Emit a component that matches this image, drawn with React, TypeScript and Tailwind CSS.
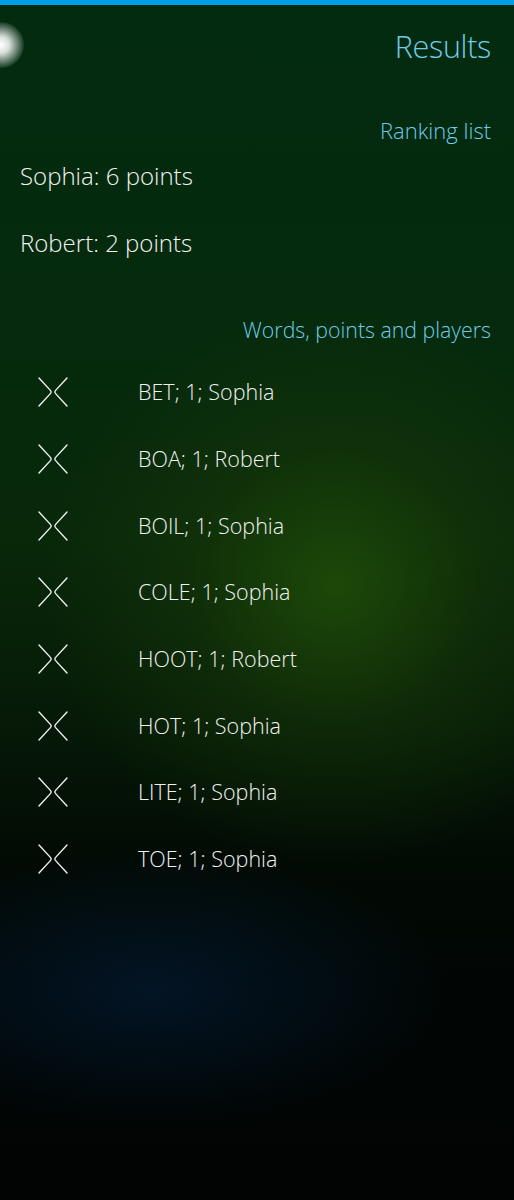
import React from "react";

const words = [
  "BET; 1; Sophia",
  "BOA; 1; Robert",
  "BOIL; 1; Sophia",
  "COLE; 1; Sophia",
  "HOOT; 1; Robert",
  "HOT; 1; Sophia",
  "LITE; 1; Sophia",
  "TOE; 1; Sophia",
];

function ClearIcon() {
  return (
    <svg width="32" height="32" viewBox="0 0 32 32" fill="none" stroke="#f2f2f2" strokeWidth="1.4" strokeLinecap="round" strokeLinejoin="round">
      <path d="M2 2 L13.6 14.6 Q14.8 16 13.6 17.4 L2 30" />
      <path d="M30 2 L18.4 14.6 Q17.2 16 18.4 17.4 L30 30" />
    </svg>
  );
}

export default function App() {
  return (
    <div
      className="relative w-[514px] h-[1200px] overflow-hidden text-[#f2f2f2] bg-[radial-gradient(ellipse_290px_280px_at_335px_585px,rgba(30,74,8,0.95),rgba(22,56,8,0.5)_50%,transparent_100%),radial-gradient(ellipse_300px_140px_at_150px_990px,rgba(4,28,54,0.65),transparent),linear-gradient(to_bottom,#032b10_0%,#052a0d_25%,#08280a_45%,#061a07_60%,#020a04_72%,#010604_82%,#010403_100%)]"
      style={{ fontFamily: '"Open Sans", "Noto Sans", sans-serif' }}
    >
      <div className="h-[5px] bg-[#00a0e8]" />
      <div className="absolute left-[-22px] top-[22px] w-[46px] h-[46px] rounded-full bg-[radial-gradient(circle,rgba(255,255,255,1)_0%,rgba(255,255,255,0.85)_25%,rgba(255,255,255,0.25)_60%,transparent_75%)]" />

      <div className="flex flex-col font-light">
        <div className="flex justify-end pr-[23px] pt-[20px] h-[96px]">
          <span className="text-[30.5px] leading-[42px] text-[#6ecbea] tracking-[-0.3px]">Results</span>
        </div>

        <div className="flex justify-end pr-[23px] h-[28px] mt-[14px] items-start">
          <span className="text-[22px] leading-[30px] text-[#6ecbea]">Ranking list</span>
        </div>

        <div className="flex flex-col pl-[20px] -mt-[1px]">
          <div className="h-[67px] flex items-center">
            <span className="text-[24px]">Sophia: 6 points</span>
          </div>
          <div className="h-[67px] flex items-center">
            <span className="text-[24px]">Robert: 2 points</span>
          </div>
        </div>

        <div className="flex justify-end pr-[23px] h-[30px] mt-[39px]">
          <span className="text-[21.3px] leading-[30px] text-[#6ecbea]">Words, points and players</span>
        </div>

        <div className="flex flex-col mt-[14px]">
          {words.map((w) => (
            <div key={w} className="h-[66.7px] flex items-center">
              <div className="w-[104px] flex justify-center pl-[1px]">
                <ClearIcon />
              </div>
              <span className="ml-[34px] text-[21.5px]">{w}</span>
            </div>
          ))}
        </div>
      </div>
    </div>
  );
}
